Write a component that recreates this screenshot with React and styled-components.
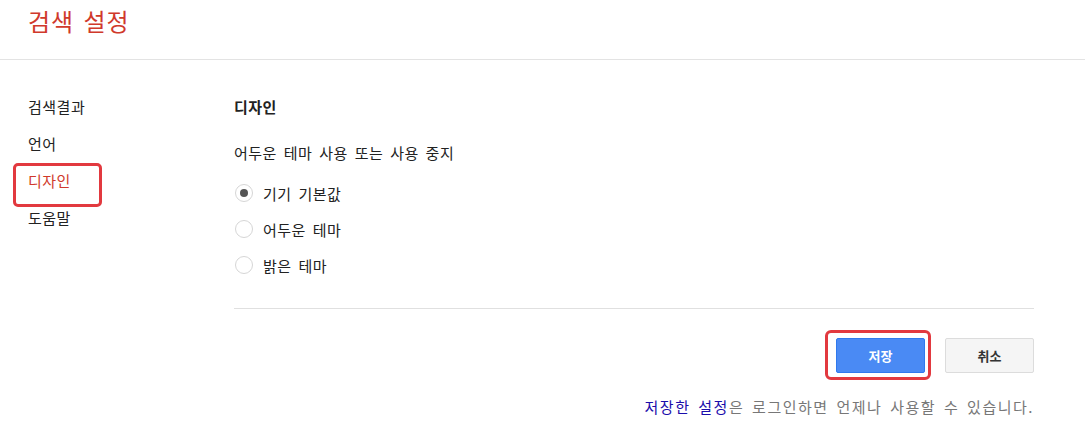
import React, { useState } from "react";
import styled, { createGlobalStyle } from "styled-components";

const Global = createGlobalStyle`
  html, body { margin: 0; padding: 0; background: #fff; }
  body {
    font-family: "Noto Sans CJK KR", "Noto Sans", Arial, sans-serif;
    color: #222;
  }
  * { box-sizing: border-box; }
`;

const Page = styled.div`
  width: 1085px;
  min-height: 431px;
  background: #fff;
`;

const Header = styled.header`
  height: 60px;
  padding-left: 28px;
  border-bottom: 1px solid #e3e3e3;
  display: flex;
  align-items: flex-start;
`;

const Title = styled.h1`
  margin: 6px 0 0;
  font-size: 24px;
  font-weight: 400;
  line-height: 30px;
  color: #d0392b;
  letter-spacing: 1px;
  word-spacing: 3px;
`;

const Main = styled.div`
  display: flex;
`;

const Nav = styled.nav`
  width: 234px;
  flex: none;
  padding: 28px 0 0 28px;
  display: flex;
  flex-direction: column;
`;

const NavItem = styled.div`
  position: relative;
  height: 37px;
  line-height: 37px;
  font-size: 15px;
  color: ${(p) => (p.$active ? "#d0392b" : "#222")};
  letter-spacing: 0.5px;
  cursor: pointer;
  align-self: flex-start;

  ${(p) =>
    p.$active &&
    `
    &::after {
      content: "";
      position: absolute;
      left: -15px;
      top: 1px;
      width: 83px;
      height: 38px;
      border: 3px solid #e2393f;
      border-radius: 5px;
    }
  `}
`;

const Content = styled.section`
  width: 800px;
  display: flex;
  flex-direction: column;
`;

const Heading = styled.h2`
  margin: 37px 0 0;
  font-size: 15px;
  font-weight: 700;
  line-height: 20px;
  color: #222;
  letter-spacing: 0.5px;
`;

const Description = styled.p`
  margin: 26px 0 0;
  font-size: 15px;
  line-height: 20px;
  color: #222;
  letter-spacing: 0.5px;
  word-spacing: 3px;
`;

const RadioList = styled.div`
  margin-top: 12px;
  display: flex;
  flex-direction: column;
`;

const RadioRow = styled.label`
  height: 36px;
  display: flex;
  align-items: center;
  gap: 10px;
  font-size: 15px;
  color: #222;
  letter-spacing: 0.5px;
  word-spacing: 3px;
  cursor: pointer;
`;

const RadioCircle = styled.span`
  width: 18px;
  height: 18px;
  margin-left: 1px;
  border-radius: 50%;
  border: 1px solid #d6d6d6;
  background: #fff;
  display: flex;
  align-items: center;
  justify-content: center;
  flex: none;

  &::after {
    content: "";
    width: 8px;
    height: 8px;
    border-radius: 50%;
    background: ${(p) => (p.$checked ? "#555" : "transparent")};
  }
`;

const Divider = styled.hr`
  margin: 25px 0 0;
  border: 0;
  border-top: 1px solid #e0e0e0;
  width: 800px;
`;

const ButtonRow = styled.div`
  margin-top: 29px;
  display: flex;
  justify-content: flex-end;
  gap: 20px;
`;

const Button = styled.button`
  position: relative;
  width: 89px;
  height: 35px;
  border-radius: 2px;
  font-family: inherit;
  font-size: 13px;
  font-weight: 700;
  cursor: pointer;
  border: 1px solid ${(p) => (p.$primary ? "#3079ed" : "#dcdcdc")};
  background: ${(p) => (p.$primary ? "#4a8af4" : "#f5f5f5")};
  color: ${(p) => (p.$primary ? "#fff" : "#333")};

  ${(p) =>
    p.$marked &&
    `
    &::after {
      content: "";
      position: absolute;
      left: -12px;
      top: -9px;
      right: -7px;
      bottom: -8px;
      border: 3px solid #e2393f;
      border-radius: 6px;
      pointer-events: none;
    }
  `}
`;

const Footer = styled.p`
  margin: 24px 0 0;
  text-align: right;
  font-size: 15px;
  line-height: 20px;
  color: #777;
  letter-spacing: 1.5px;
  word-spacing: 3px;
`;

const Link = styled.a`
  color: #1a0dab;
  text-decoration: none;
`;

const navItems = ["검색결과", "언어", "디자인", "도움말"];
const options = ["기기 기본값", "어두운 테마", "밝은 테마"];

export default function App() {
  const [selected, setSelected] = useState(0);
  return (
    <Page>
      <Global />
      <Header>
        <Title>검색 설정</Title>
      </Header>
      <Main>
        <Nav>
          {navItems.map((n) => (
            <NavItem key={n} $active={n === "디자인"}>
              {n}
            </NavItem>
          ))}
        </Nav>
        <Content>
          <Heading>디자인</Heading>
          <Description>어두운 테마 사용 또는 사용 중지</Description>
          <RadioList>
            {options.map((o, i) => (
              <RadioRow key={o} onClick={() => setSelected(i)}>
                <RadioCircle $checked={selected === i} />
                {o}
              </RadioRow>
            ))}
          </RadioList>
          <Divider />
          <ButtonRow>
            <Button $primary $marked>저장</Button>
            <Button>취소</Button>
          </ButtonRow>
          <Footer>
            <Link href="#">저장한 설정</Link>은 로그인하면 언제나 사용할 수 있습니다.
          </Footer>
        </Content>
      </Main>
    </Page>
  );
}
